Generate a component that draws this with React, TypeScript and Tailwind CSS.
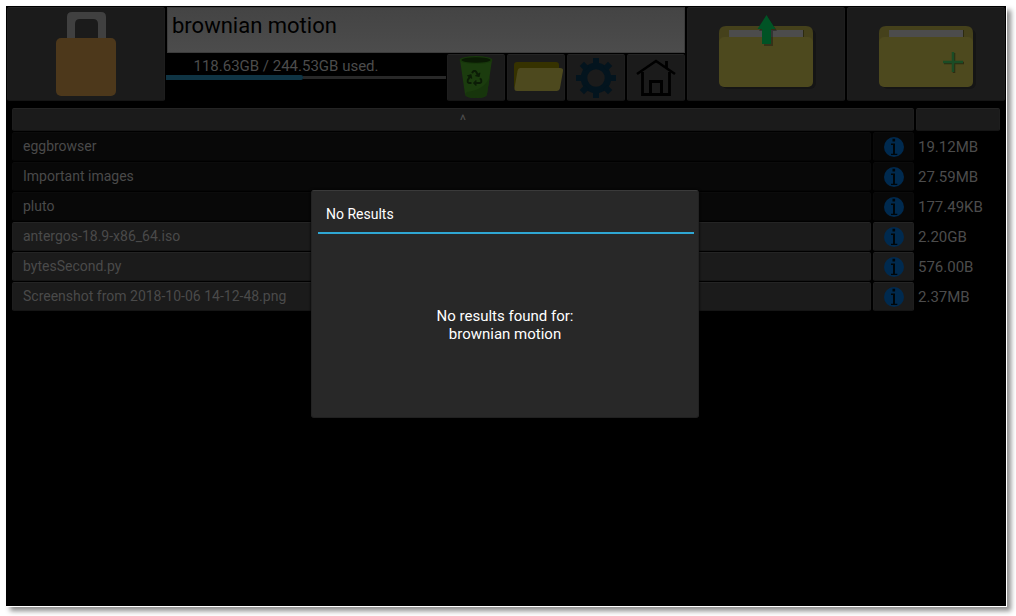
import React from "react";
import { FaRecycle } from "react-icons/fa";

type Entry = { name: string; size: string; folder: boolean };

const entries: Entry[] = [
  { name: "eggbrowser", size: "19.12MB", folder: true },
  { name: "Important images", size: "27.59MB", folder: true },
  { name: "pluto", size: "177.49KB", folder: true },
  { name: "antergos-18.9-x86_64.iso", size: "2.20GB", folder: false },
  { name: "bytesSecond.py", size: "576.00B", folder: false },
  { name: "Screenshot from 2018-10-06 14-12-48.png", size: "2.37MB", folder: false },
];

const raised =
  "rounded-[2px] border border-t-[#242424] border-x-[#1e1e1e] border-b-[#151515] bg-[#1b1b1b]";
const sunken =
  "rounded-[2px] border border-t-[#0b0b0b] border-x-[#0a0a0a] border-b-[#050505] bg-[#080808]";

function LockIcon() {
  return (
    <svg width="60" height="84" viewBox="0 0 60 84" aria-hidden="true">
      <path
        d="M11 30V5q0-5 5-5h29q5 0 5 5v25h-8V12q0-5-5-5H24q-5 0-5 5v18z"
        fill="#404040"
      />
      <rect y="26" width="60" height="58" rx="5" fill="#4d381b" />
    </svg>
  );
}

function FolderBase() {
  return (
    <>
      <rect x="3" y="14" width="94" height="60" rx="6" fill="#111" opacity="0.55" />
      <path d="M0 28V18q0-7 7-7h80q7 0 7 7v10z" fill="#45411b" />
      <path d="M12 15h73v9H12z" fill="#151505" opacity="0.5" />
      <rect x="10" y="15" width="74" height="9" fill="#4c4c4c" />
      <rect y="22" width="94" height="50" rx="5" fill="#4d491e" />
    </>
  );
}

function UploadIcon() {
  return (
    <svg width="100" height="78" viewBox="0 0 100 78" aria-hidden="true">
      <FolderBase />
      <path d="M49 2l9 14h-4v15h-9V16h-5z" fill="#111" opacity="0.4" />
      <path d="M47.500 0l9 14H52v15h-9V14h-4.500z" fill="#005325" />
    </svg>
  );
}

function NewFolderIcon() {
  return (
    <svg width="100" height="78" viewBox="0 0 100 78" aria-hidden="true">
      <FolderBase />
      <path d="M75 38v20M65 48h20" stroke="#2e2c12" strokeWidth="2.500" />
      <path d="M74 37v20M64 47h20" stroke="#1a4c25" strokeWidth="2.500" />
    </svg>
  );
}

function BinIcon() {
  return (
    <svg width="34" height="44" viewBox="0 0 34 44" aria-hidden="true">
      <path d="M1 4l5 34q0 4 11 4t11-4l5-34z" fill="#1b3c0e" />
      <path d="M31 20q-5 14-23 16l-2 2q0 4 11 4t11-4z" fill="#17350c" />
      <ellipse cx="17" cy="4" rx="16.500" ry="4" fill="#17370b" />
      <ellipse cx="17" cy="4" rx="14.500" ry="2.800" fill="#0a1a04" />
      <FaRecycle x="7.500" y="14" width="19" height="19" color="#0b1c06" />
    </svg>
  );
}

function FolderIcon() {
  return (
    <svg width="56" height="32" viewBox="-6 0 56 32" aria-hidden="true">
      <path d="M0 3q0-3 3-3h39q3 0 3 3v24H3q-3 0-3-3z" fill="#363200" />
      <path
        d="M6.500 6H46q3.500 0 3 3l-3 17q-.7 3-3.500 3H3q-3 0-2.500-3l3-17q.5-3 3-3z"
        fill="#4d491e"
      />
    </svg>
  );
}

const teeth = [0, 45, 90, 135, 180, 225, 270, 315];

function GearIcon() {
  return (
    <svg width="40" height="40" viewBox="0 0 40 40" aria-hidden="true">
      <circle cx="20" cy="20" r="12" fill="none" stroke="#03141e" strokeWidth="6.500" />
      {teeth.map((a) => (
        <path key={a} d="M17 0h6v7h-6z" fill="#03141e" transform={`rotate(${a} 20 20)`} />
      ))}
    </svg>
  );
}

function HomeIcon() {
  return (
    <svg width="40" height="38" viewBox="0 0 40 38" aria-hidden="true">
      <g fill="none" stroke="#000">
        <path d="M1 15L20 2l19 13" strokeWidth="2.600" />
        <path d="M6.500 13v22.500h27V13M30.500 9V2" strokeWidth="2.800" />
        <path d="M14.500 35V22.500h11V35" strokeWidth="3" />
      </g>
    </svg>
  );
}

function InfoIcon() {
  return (
    <svg width="20" height="20" viewBox="0 0 20 20" aria-hidden="true">
      <circle cx="10" cy="10" r="10" fill="#002a4f" />
      <path
        d="M8.500 1.800h2.600v2.600H8.500zM7 6.500h4v10.300h2.300V18H7v-1.200h2V8H7z"
        fill="#000609"
      />
    </svg>
  );
}

function ToolButton({ label, children }: { label: string; children: React.ReactNode }) {
  return (
    <button
      type="button"
      aria-label={label}
      className={`flex w-[58px] shrink-0 items-center justify-center ${raised}`}
    >
      {children}
    </button>
  );
}

function TopBar() {
  return (
    <header className="flex h-[95px] gap-0.5 px-px pt-px">
      <button
        type="button"
        aria-label="Lock"
        className={`flex w-[158px] shrink-0 items-center justify-center ${raised}`}
      >
        <LockIcon />
      </button>
      <div className="flex min-w-0 flex-1 flex-col gap-px">
        <input
          type="text"
          aria-label="Search"
          defaultValue="brownian motion"
          className="h-[46px] w-full border border-[#3c3c3c] bg-linear-to-b from-[#444444] to-[#4c4c4c] px-1 pb-2.5 text-[22px] text-black outline-none"
        />
        <div className="flex flex-1 gap-px">
          <div className="-ml-px flex min-w-0 flex-1 flex-col pt-[3px]">
            <p className="pr-10 text-center text-[15px] leading-[18px] text-[#4c4c4c]">
              118.63GB / 244.53GB used.
            </p>
            <div
              role="progressbar"
              aria-label="Storage used"
              aria-valuenow={49}
              className="flex h-[5px] items-center"
            >
              <div className="h-[5px] w-[49%] rounded-r-[2px] bg-[#0f3444]" />
              <div className="h-[3px] flex-1 bg-[#282828]" />
            </div>
          </div>
          <div className="flex gap-0.5">
            <ToolButton label="Recycle bin"><BinIcon /></ToolButton>
            <ToolButton label="Browse folder"><FolderIcon /></ToolButton>
            <ToolButton label="Settings"><GearIcon /></ToolButton>
            <ToolButton label="Home"><HomeIcon /></ToolButton>
          </div>
        </div>
      </div>
      <button
        type="button"
        aria-label="Upload"
        className={`flex w-[158px] shrink-0 items-center justify-center pl-1.5 ${raised}`}
      >
        <UploadIcon />
      </button>
      <button
        type="button"
        aria-label="New folder"
        className={`flex w-[158px] shrink-0 items-center justify-center pl-1.5 ${raised}`}
      >
        <NewFolderIcon />
      </button>
    </header>
  );
}

function FileTable() {
  return (
    <div className="px-1 pt-1.5">
      <table className="w-full table-fixed border-separate border-spacing-x-[2px] border-spacing-y-px text-left">
        <colgroup>
          <col />
          <col className="w-[41px]" />
          <col className="w-[84px]" />
        </colgroup>
        <thead>
          <tr>
            <th colSpan={2} className="p-0">
              <button
                type="button"
                aria-label="Sort by name"
                className={`flex h-[23px] w-full items-center justify-center pt-0.5 text-[15px] font-normal text-[#4c4c4c] ${raised}`}
              >
                ^
              </button>
            </th>
            <th className="p-0">
              <button
                type="button"
                aria-label="Sort by size"
                className={`block h-[23px] w-full ${raised}`}
              />
            </th>
          </tr>
        </thead>
        <tbody>
          {entries.map((e) => (
            <tr key={e.name}>
              <td className="p-0">
                <button
                  type="button"
                  className={`flex h-[29px] w-full items-center px-2.5 text-[14px] text-[#4a4a4a] ${e.folder ? sunken : raised}`}
                >
                  {e.name}
                </button>
              </td>
              <td className="p-0">
                <button
                  type="button"
                  aria-label={`Details of ${e.name}`}
                  className={`flex h-[29px] w-full items-center justify-center ${e.folder ? sunken : raised}`}
                >
                  <InfoIcon />
                </button>
              </td>
              <td className="p-0 pl-0.5 text-[15px] leading-[18px] text-[#4c4c4c]">{e.size}</td>
            </tr>
          ))}
        </tbody>
      </table>
    </div>
  );
}

function ResultDialog() {
  return (
    <div className="absolute inset-0 flex items-center justify-center">
      <section
        role="dialog"
        aria-labelledby="dialog-title"
        className="mr-0.5 mb-1 flex h-[228px] w-[388px] flex-col rounded-[3px] border border-x-[#222222] border-t-[#3a3a3a] border-b-[#202020] bg-[#282828] pr-1 pl-1.5 text-white shadow-[0_0_3px_#000]"
      >
        <h2
          id="dialog-title"
          className="border-b-2 border-[#2fa7d4] px-2 pt-3.5 pb-[9px] text-[14px] leading-[18px]"
        >
          No Results
        </h2>
        <p className="flex flex-1 flex-col items-center justify-center pr-0.5 pb-0.5 text-center text-[15px] leading-[18px]">
          <span>No results found for:</span>
          <span>brownian motion</span>
        </p>
      </section>
    </div>
  );
}

export default function App() {
  return (
    <div className="flex min-h-screen bg-white pt-1.5 pr-[9px] pb-[9px] pl-1.5 font-[Roboto,sans-serif]">
      <main className="relative flex-1 border-r border-b border-white bg-black shadow-[4px_4px_5px_rgba(0,0,0,0.45)]">
        <TopBar />
        <FileTable />
        <ResultDialog />
      </main>
    </div>
  );
}
